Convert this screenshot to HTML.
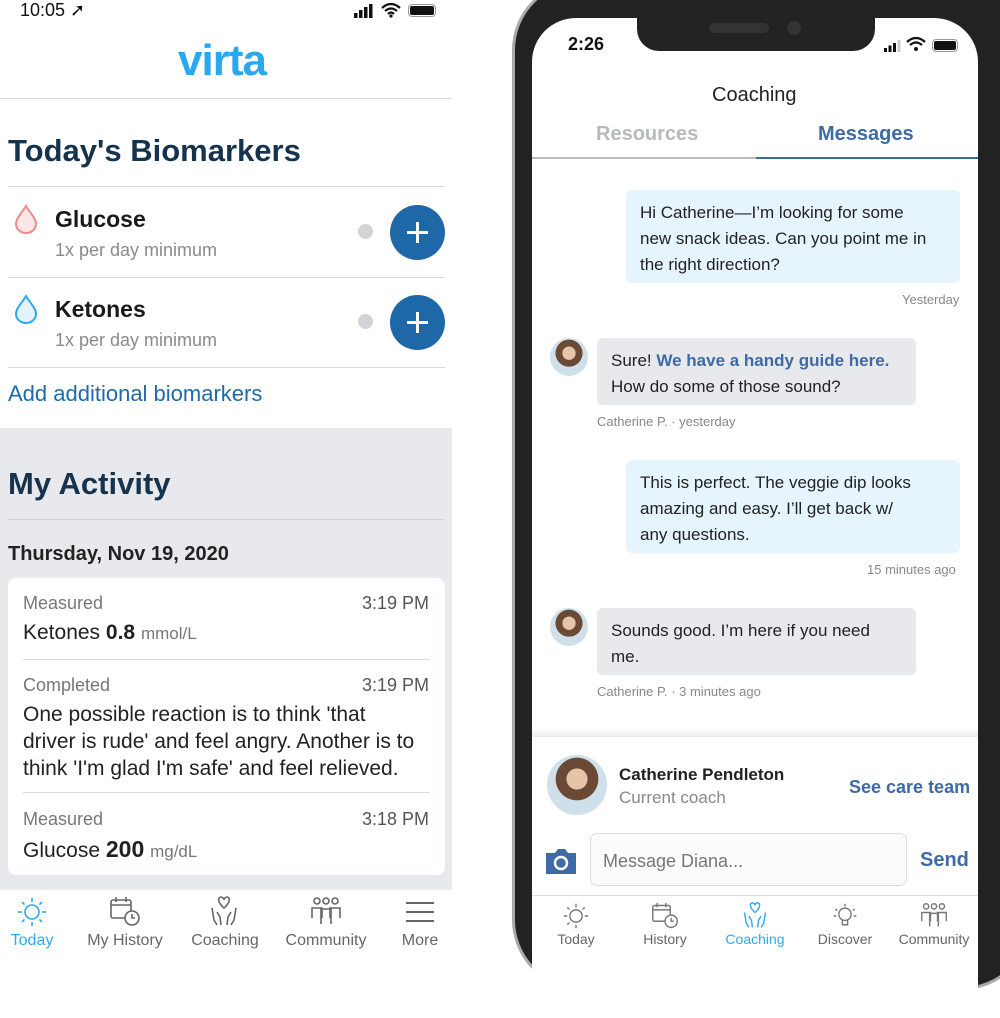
<!DOCTYPE html>
<html><head><meta charset="utf-8"><style>
*{margin:0;padding:0;box-sizing:border-box}
body{width:1000px;height:961px;position:relative;overflow:hidden;background:#fff;font-family:"Liberation Sans",sans-serif;color:#222}
.a{position:absolute;white-space:nowrap}
.hr{position:absolute;height:1px;background:#dcdcdc}
.plus{position:absolute;width:55px;height:55px;border-radius:50%;background:#1f68a8}
.plus:before,.plus:after{content:"";position:absolute;background:#fff;left:17px;top:26px;width:21px;height:3px}
.plus:after{left:26px;top:17px;width:3px;height:21px}
.dot{position:absolute;width:15px;height:15px;border-radius:50%;background:#d2d3d6}
.nav{position:absolute;font-size:16px;color:#666;text-align:center}
.bub{position:absolute;border-radius:6px;font-size:17px;line-height:26px;color:#222;padding:10px 14px;white-space:nowrap}
.meta{position:absolute;font-size:13px;color:#888;white-space:nowrap}
.av{position:absolute;border-radius:50%;background:radial-gradient(circle at 50% 40%,#e7c3a8 0 22%,#6b4a35 23% 45%,#cfe0ea 46%)}
</style></head><body>
<!-- LEFT -->
<div class="a" style="left:20px;top:0;font-size:18px;color:#111">10:05 ➚</div>
<svg class="a" style="left:354px;top:4px" width="20" height="14" viewBox="0 0 20 14" fill="#111"><rect x="0" y="9" width="3.5" height="5"/><rect x="5" y="6" width="3.5" height="8"/><rect x="10" y="3" width="3.5" height="11"/><rect x="15" y="0" width="3.5" height="14"/></svg>
<svg class="a" style="left:381px;top:3px" width="20" height="15" viewBox="0 0 20 15"><path d="M1 5Q10-3 19 5M4 8Q10 3 16 8M7 11Q10 8 13 11" stroke="#111" stroke-width="2.2" fill="none"/><circle cx="10" cy="13" r="1.6" fill="#111"/></svg>
<div class="a" style="left:408px;top:4px;width:28px;height:13px;border:1.5px solid #999;border-radius:4px;padding:1px"><div style="background:#111;height:100%;border-radius:2px"></div></div>
<div class="a" style="left:178px;top:36px;font-size:44px;color:#29a8f0;font-weight:bold;letter-spacing:-1px">virta</div>
<div class="hr" style="left:0;top:98px;width:452px"></div>
<div class="a" style="left:8px;top:133px;font-size:31px;font-weight:bold;color:#16334d">Today's Biomarkers</div>
<div class="hr" style="left:8px;top:186px;width:437px"></div>
<svg class="a" style="left:13px;top:204px" width="26" height="30" viewBox="0 0 26 30"><path d="M13 2C9 9 3 14 3 20a10 9 0 0 0 20 0C23 14 17 9 13 2z" fill="#fde6e6" stroke="#f08a8a" stroke-width="2"/></svg>
<div class="a" style="left:55px;top:206px;font-size:23px;font-weight:bold;color:#1a1a1a">Glucose</div>
<div class="a" style="left:55px;top:240px;font-size:18px;color:#8a8a8a">1x per day minimum</div>
<div class="dot" style="left:358px;top:224px"></div><div class="plus" style="left:390px;top:205px"></div>
<div class="hr" style="left:8px;top:277px;width:437px"></div>
<svg class="a" style="left:13px;top:294px" width="26" height="30" viewBox="0 0 26 30"><path d="M13 2C9 9 3 14 3 20a10 9 0 0 0 20 0C23 14 17 9 13 2z" fill="#e3f3fd" stroke="#2ea9ef" stroke-width="2"/></svg>
<div class="a" style="left:55px;top:296px;font-size:23px;font-weight:bold;color:#1a1a1a">Ketones</div>
<div class="a" style="left:55px;top:330px;font-size:18px;color:#8a8a8a">1x per day minimum</div>
<div class="dot" style="left:358px;top:314px"></div><div class="plus" style="left:390px;top:295px"></div>
<div class="hr" style="left:8px;top:367px;width:437px"></div>
<div class="a" style="left:8px;top:381px;font-size:22px;color:#1f6aa8">Add additional biomarkers</div>
<div class="a" style="left:0;top:428px;width:452px;height:462px;background:#e8e9ec"></div>
<div class="a" style="left:8px;top:466px;font-size:31px;font-weight:bold;color:#16334d">My Activity</div>
<div class="hr" style="left:8px;top:519px;width:437px;background:#d4d5d8"></div>
<div class="a" style="left:8px;top:543px;font-size:20px;font-weight:bold;color:#222">Thursday, Nov 19, 2020</div>
<div class="a" style="left:8px;top:578px;width:437px;height:297px;background:#fff;border-radius:8px"></div>
<div class="a" style="left:23px;top:593px;font-size:18px;color:#777">Measured</div><div class="a" style="left:362px;top:593px;font-size:18px;color:#555">3:19 PM</div>
<div class="a" style="left:23px;top:621px;font-size:21px;color:#222">Ketones <b>0.8</b> <span style="font-size:17px;color:#777">mmol/L</span></div>
<div class="hr" style="left:23px;top:659px;width:407px"></div>
<div class="a" style="left:23px;top:675px;font-size:18px;color:#777">Completed</div><div class="a" style="left:362px;top:675px;font-size:18px;color:#555">3:19 PM</div>
<div class="a" style="left:23px;top:701px;font-size:21px;line-height:27px;color:#222">One possible reaction is to think 'that<br>driver is rude' and feel angry. Another is to<br>think 'I'm glad I'm safe' and feel relieved.</div>
<div class="hr" style="left:23px;top:792px;width:407px"></div>
<div class="a" style="left:23px;top:809px;font-size:18px;color:#777">Measured</div><div class="a" style="left:362px;top:809px;font-size:18px;color:#555">3:18 PM</div>
<div class="a" style="left:23px;top:836px;font-size:21px;color:#222">Glucose <b style="font-size:23px">200</b> <span style="font-size:17px;color:#777">mg/dL</span></div>
<svg class="a" style="left:15px;top:896px" width="34" height="32" viewBox="0 0 34 32" fill="none" stroke="#2ea9ef" stroke-width="1.6"><circle cx="17" cy="16" r="7"/><path d="M17 2v4M17 26v4M3 16h4M27 16h4M7 6l2.5 2.5M24.5 23.5L27 26M7 26l2.5-2.5M24.5 8.5L27 6"/></svg>
<div class="nav" style="left:0;top:932px;width:64px;color:#2ea9ef">Today</div>
<svg class="a" style="left:108px;top:896px" width="34" height="32" viewBox="0 0 34 32" fill="none" stroke="#666" stroke-width="1.6"><rect x="3" y="4" width="20" height="18" rx="2"/><path d="M3 9h20M8 1v5M18 1v5"/><circle cx="24" cy="22" r="7" fill="#fff"/><path d="M24 18v4h3"/></svg>
<div class="nav" style="left:76px;top:932px;width:98px">My History</div>
<svg class="a" style="left:207px;top:896px" width="34" height="32" viewBox="0 0 34 32" fill="none" stroke="#666" stroke-width="1.6"><path d="M17 12C10 6 11 1 14 1c2 0 3 2 3 3 0-1 1-3 3-3 3 0 4 5-3 11z"/><path d="M5 12l2 12 3 5M10 16l3 5 1 8M29 12l-2 12-3 5M24 16l-3 5-1 8"/></svg>
<div class="nav" style="left:186px;top:932px;width:78px">Coaching</div>
<svg class="a" style="left:309px;top:896px" width="34" height="32" viewBox="0 0 34 32" fill="none" stroke="#666" stroke-width="1.6"><circle cx="8" cy="5" r="3"/><circle cx="17" cy="5" r="3"/><circle cx="26" cy="5" r="3"/><path d="M3 22V12h10v10M12 28V13h10v15M21 22V12h10v10"/></svg>
<div class="nav" style="left:280px;top:932px;width:92px">Community</div>
<svg class="a" style="left:405px;top:900px" width="30" height="24" viewBox="0 0 30 24" stroke="#666" stroke-width="2"><path d="M1 3h28M1 12h28M1 21h28"/></svg>
<div class="nav" style="left:396px;top:932px;width:48px">More</div>

<!-- RIGHT PHONE -->
<div class="a" style="left:512px;top:-20px;width:520px;height:1010px;background:#222;border-radius:70px;border:3px solid #aaa"></div>
<div class="a" style="left:532px;top:18px;width:446px;height:1000px;background:#fff;border-radius:44px 44px 0 0;overflow:hidden">
 <div class="a" style="left:105px;top:-2px;width:238px;height:35px;background:#222;border-radius:0 0 22px 22px"></div>
 <div class="a" style="left:177px;top:5px;width:60px;height:10px;border-radius:5px;background:#333"></div>
 <div class="a" style="left:255px;top:3px;width:14px;height:14px;border-radius:50%;background:#333"></div>
</div>
<div class="a" style="left:568px;top:34px;font-size:18px;font-weight:bold;color:#111">2:26</div>
<svg class="a" style="left:884px;top:40px" width="18" height="12" viewBox="0 0 18 12"><rect x="0" y="8" width="3" height="4" fill="#111"/><rect x="4.5" y="5.5" width="3" height="6.5" fill="#111"/><rect x="9" y="3" width="3" height="9" fill="#111"/><rect x="13.5" y="0" width="3" height="12" fill="#ccc"/></svg>
<svg class="a" style="left:906px;top:37px" width="20" height="15" viewBox="0 0 20 15"><path d="M1 5Q10-3 19 5M4 8Q10 3 16 8" stroke="#111" stroke-width="2.2" fill="none"/><circle cx="10" cy="12" r="2" fill="#111"/></svg>
<div class="a" style="left:932px;top:39px;width:26px;height:13px;border:1.5px solid #999;border-radius:4px;padding:1px"><div style="background:#111;height:100%;border-radius:2px"></div></div>
<div class="a" style="left:712px;top:84px;font-size:20px;color:#222">Coaching</div>
<div class="a" style="left:596px;top:123px;font-size:20px;font-weight:bold;color:#b8b9bd">Resources</div>
<div class="a" style="left:818px;top:123px;font-size:20px;font-weight:bold;color:#3e6aa6">Messages</div>
<div class="a" style="left:532px;top:157px;width:224px;height:2px;background:#bbb"></div>
<div class="a" style="left:756px;top:157px;width:222px;height:2px;background:#3e6aa6"></div>
<div class="bub" style="left:626px;top:190px;width:334px;height:93px;background:#e5f4fd">Hi Catherine—I’m looking for some<br>new snack ideas. Can you point me in<br>the right direction?</div>
<div class="meta" style="left:902px;top:292px">Yesterday</div>
<div class="av" style="left:550px;top:338px;width:38px;height:38px"></div>
<div class="bub" style="left:597px;top:338px;width:319px;height:67px;background:#e8e9ec">Sure! <b style="color:#3e6aa6">We have a handy guide here.</b><br>How do some of those sound?</div>
<div class="meta" style="left:597px;top:414px">Catherine P. · yesterday</div>
<div class="bub" style="left:626px;top:460px;width:334px;height:93px;background:#e5f4fd">This is perfect. The veggie dip looks<br>amazing and easy. I’ll get back w/<br>any questions.</div>
<div class="meta" style="left:867px;top:562px">15 minutes ago</div>
<div class="av" style="left:550px;top:608px;width:38px;height:38px"></div>
<div class="bub" style="left:597px;top:608px;width:319px;height:67px;background:#e8e9ec">Sounds good. I’m here if you need<br>me.</div>
<div class="meta" style="left:597px;top:684px">Catherine P. · 3 minutes ago</div>
<div class="a" style="left:532px;top:728px;width:446px;height:9px;background:linear-gradient(#fff,#ececec)"></div>
<div class="av" style="left:547px;top:755px;width:60px;height:60px"></div>
<div class="a" style="left:619px;top:765px;font-size:17px;font-weight:bold;color:#222">Catherine Pendleton</div>
<div class="a" style="left:619px;top:788px;font-size:17px;color:#888">Current coach</div>
<div class="a" style="left:849px;top:777px;font-size:18px;font-weight:bold;color:#3e6aa6">See care team</div>
<svg class="a" style="left:544px;top:847px" width="34" height="28" viewBox="0 0 34 28"><path d="M2 6h9l3-4h7l3 4h8v21H2z" fill="#3e6aa6"/><circle cx="17" cy="16" r="6" fill="none" stroke="#fff" stroke-width="2.5"/></svg>
<div class="a" style="left:590px;top:833px;width:317px;height:53px;border:1.5px solid #ddd;border-radius:7px;background:#fbfbfb"></div>
<div class="a" style="left:603px;top:851px;font-size:18px;color:#777">Message Diana...</div>
<div class="a" style="left:920px;top:849px;font-size:20px;font-weight:bold;color:#3e6aa6">Send</div>
<div class="a" style="left:532px;top:895px;width:446px;height:1px;background:#ddd"></div>
<svg class="a" style="left:561px;top:902px" width="30" height="28" viewBox="0 0 34 32" fill="none" stroke="#777" stroke-width="1.6"><circle cx="17" cy="16" r="7"/><path d="M17 2v4M17 26v4M3 16h4M27 16h4M7 6l2.5 2.5M7 26l2.5-2.5M27 6l-2.5 2.5"/></svg>
<div class="nav" style="left:546px;top:931px;width:60px;font-size:14px">Today</div>
<svg class="a" style="left:650px;top:902px" width="30" height="28" viewBox="0 0 34 32" fill="none" stroke="#777" stroke-width="1.6"><rect x="3" y="4" width="20" height="18" rx="2"/><path d="M3 9h20M8 1v5M18 1v5"/><circle cx="24" cy="22" r="7" fill="#fff"/><path d="M24 18v4h3"/></svg>
<div class="nav" style="left:635px;top:931px;width:60px;font-size:14px">History</div>
<svg class="a" style="left:740px;top:902px" width="30" height="28" viewBox="0 0 34 32" fill="none" stroke="#2ea9ef" stroke-width="1.6"><path d="M17 12C10 6 11 1 14 1c2 0 3 2 3 3 0-1 1-3 3-3 3 0 4 5-3 11z"/><path d="M5 12l2 12 3 5M10 16l3 5 1 8M29 12l-2 12-3 5M24 16l-3 5-1 8"/></svg>
<div class="nav" style="left:720px;top:931px;width:70px;font-size:14px;color:#2ea9ef">Coaching</div>
<svg class="a" style="left:830px;top:902px" width="30" height="28" viewBox="0 0 34 32" fill="none" stroke="#777" stroke-width="1.6"><circle cx="17" cy="14" r="7"/><path d="M14 21v5h6v-5M17 2v3M6 8l2 2M28 8l-2 2M4 16h3M27 16h3"/></svg>
<div class="nav" style="left:810px;top:931px;width:70px;font-size:14px">Discover</div>
<svg class="a" style="left:919px;top:902px" width="30" height="28" viewBox="0 0 34 32" fill="none" stroke="#777" stroke-width="1.6"><circle cx="8" cy="5" r="3"/><circle cx="17" cy="5" r="3"/><circle cx="26" cy="5" r="3"/><path d="M3 22V12h10v10M12 28V13h10v15M21 22V12h10v10"/></svg>
<div class="nav" style="left:894px;top:931px;width:80px;font-size:14px">Community</div>
</body></html>
